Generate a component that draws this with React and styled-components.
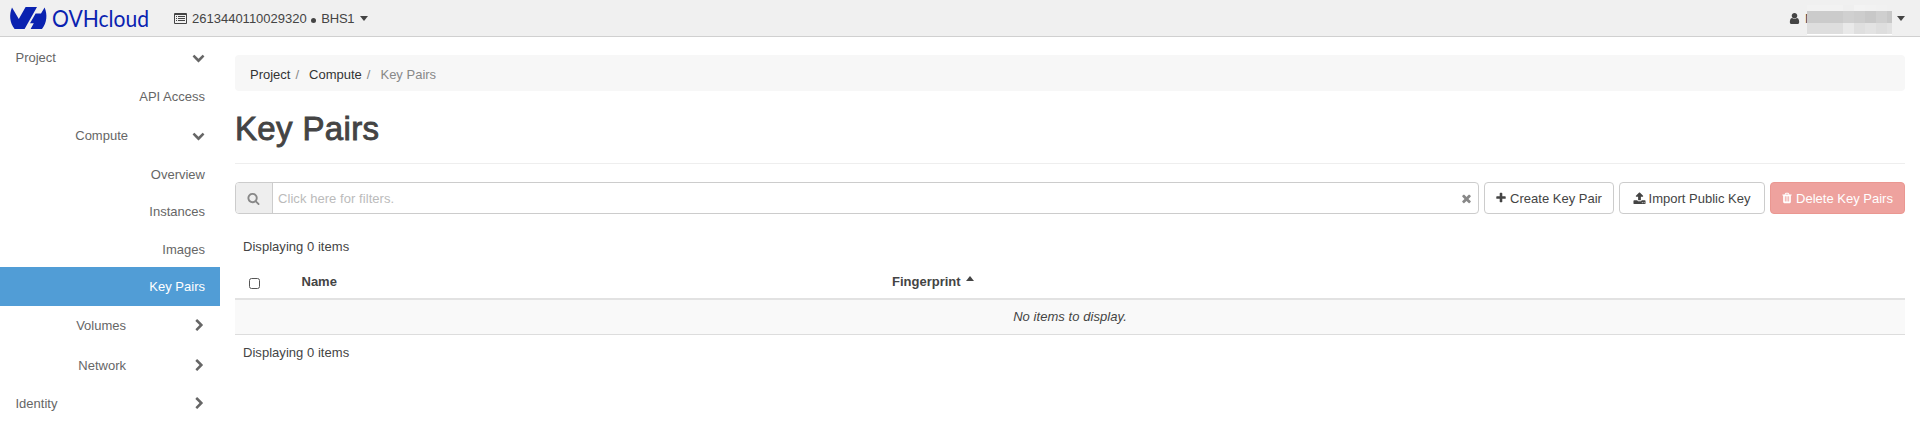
import React from "react";
import styled, { createGlobalStyle, css } from "styled-components";

const GlobalStyle = createGlobalStyle`
  *, *::before, *::after { box-sizing: border-box; }
  body {
    margin: 0;
    background: #fff;
    color: #444;
    font: 13px/18px "Liberation Sans", Arial, sans-serif;
    overflow: hidden;
  }
`;

const paths = {
  down: "M1683 808l-742 741q-19 19-45 19t-45-19l-742-741q-19-19-19-45.5t19-45.5l166-165q19-19 45-19t45 19l531 531 531-531q19-19 45-19t45 19l166 165q19 19 19 45.5t-19 45.5z",
  right: "M1363 877l-742 742q-19 19-45 19t-45-19l-166-166q-19-19-19-45t19-45l531-531-531-531q-19-19-19-45t19-45l166-166q19-19 45-19t45 19l742 742q19 19 19 45t-19 45z",
  search: "M1216 832q0-185-131.5-316.5t-316.5-131.5-316.5 131.5-131.5 316.5 131.5 316.5 316.5 131.5 316.5-131.5 131.5-316.5zm512 832q0 52-38 90t-90 38q-54 0-90-38l-343-342q-179 124-399 124-143 0-273.5-55.5t-225-150-150-225-55.5-273.5 55.5-273.5 150-225 225-150 273.5-55.5 273.5 55.5 225 150 150 225 55.5 273.5q0 220-124 399l343 343q37 37 37 90z",
  times: "M1490 1322q0 40-28 68l-136 136q-28 28-68 28t-68-28l-294-294-294 294q-28 28-68 28t-68-28l-136-136q-28-28-28-68t28-68l294-294-294-294q-28-28-28-68t28-68l136-136q28-28 68-28t68 28l294 294 294-294q28-28 68-28t68 28l136 136q28 28 28 68t-28 68l-294 294 294 294q28 28 28 68z",
  plus: "M1600 736v192q0 40-28 68t-68 28h-416v416q0 40-28 68t-68 28h-192q-40 0-68-28t-28-68v-416h-416q-40 0-68-28t-28-68v-192q0-40 28-68t68-28h416v-416q0-40 28-68t68-28h192q40 0 68 28t28 68v416h416q40 0 68 28t28 68z",
  upload: "M1344 1472q0-26-19-45t-45-19-45 19-19 45 19 45 45 19 45-19 19-45zm256 0q0-26-19-45t-45-19-45 19-19 45 19 45 45 19 45-19 19-45zm128-224v320q0 40-28 68t-68 28h-1472q-40 0-68-28t-28-68v-320q0-40 28-68t68-28h427q21 56 70.5 92t110.5 36h256q61 0 110.5-36t70.5-92h427q40 0 68 28t28 68zm-325-648q-17 40-59 40h-256v448q0 26-19 45t-45 19h-256q-26 0-45-19t-19-45v-448h-256q-42 0-59-40-17-39 14-69l448-448q18-19 45-19t45 19l448 448q31 30 14 69z",
  trash: "M704 1376v-704q0-14-9-23t-23-9h-64q-14 0-23 9t-9 23v704q0 14 9 23t23 9h64q14 0 23-9t9-23zm256 0v-704q0-14-9-23t-23-9h-64q-14 0-23 9t-9 23v704q0 14 9 23t23 9h64q14 0 23-9t9-23zm256 0v-704q0-14-9-23t-23-9h-64q-14 0-23 9t-9 23v704q0 14 9 23t23 9h64q14 0 23-9t9-23zm-544-992h448l-48-117q-7-9-17-11h-317q-10 2-17 11zm928 32v64q0 14-9 23t-23 9h-96v948q0 83-47 143.5t-113 60.5h-832q-66 0-113-58.5t-47-141.5v-952h-96q-14 0-23-9t-9-23v-64q0-14 9-23t23-9h309l70-167q15-37 54-63t79-26h320q40 0 79 26t54 63l70 167h309q14 0 23 9t9 23z",
  user: "M1536 1399q0 109-62.5 187t-150.5 78h-854q-88 0-150.5-78t-62.5-187q0-85 8.5-160.5t31.5-152 58.5-131 94-89 134.5-34.5q131 128 313 128t313-128q76 0 134.5 34.5t94 89 58.5 131 31.5 152 8.5 160.5zm-256-887q0 159-112.5 271.5t-271.5 112.5-271.5-112.5-112.5-271.5 112.5-271.5 271.5-112.5 271.5 112.5 112.5 271.5z",
};

const Svg = styled.svg`
  display: block;
  flex: none;
  fill: currentColor;
  overflow: visible;
`;

function Icon({ name, size = 13, ...rest }) {
  return (
    <Svg width={size} height={size} viewBox="0 0 1792 1792" {...rest}>
      <path d={paths[name]} />
    </Svg>
  );
}

const Navbar = styled.header`
  display: flex;
  align-items: center;
  height: 37px;
  background: #f0f0f0;
  border-bottom: 1px solid #d0d0d0;
  padding: 0 15px 0 10px;
`;
const LogoText = styled.text`
  font: 400 24px Lato, "Open Sans", sans-serif;
  fill: #0a22b0;
`;
const ProjectPicker = styled.div`
  display: flex;
  align-items: center;
  margin-left: 24px;
`;
const ProjectName = styled.span`
  margin-left: 5px;
  padding-top: 1px;
`;
const Bullet = styled.i`
  width: 5px;
  height: 5px;
  margin: 4px 5px 0 4.5px;
  border-radius: 50%;
  background: #444;
`;
const Region = styled.span`
  padding-top: 1px;
  letter-spacing: -0.2px;
`;
const Caret = styled.i`
  width: 0;
  height: 0;
  border: 4px solid transparent;
  ${(p) =>
    p.$up
      ? css`border-bottom: 5px solid #444; border-top: 0; margin: 0 0 6px 5px;`
      : css`border-top: 5px solid #444; border-bottom: 0; margin-left: ${p.$gap || 5}px;`}
`;
const UserMenu = styled.div`
  display: flex;
  align-items: center;
  margin-left: auto;
  height: 36px;
`;
const UserInitial = styled.span`
  width: 10px;
  margin: 1px -8px 0 4px;
`;
const RedactedName = styled.div`
  z-index: 1;
  display: grid;
  grid-template-columns: 36px 11px 11px 11px 11px 5px;
  grid-template-rows: 6px 12px 11px 1px;
  margin-top: 3px;
`;
const Pixel = styled.i`
  background: ${(p) => p.$tone};
`;

const Body = styled.div`
  display: flex;
`;
const Sidebar = styled.nav`
  width: 220px;
  flex: none;
  padding-top: 1px;
  color: #666;
`;
const NavItem = styled.a`
  display: flex;
  align-items: center;
  justify-content: ${(p) => (p.$leaf ? "flex-end" : "space-between")};
  height: ${(p) => p.$height || 39}px;
  padding: ${(p) => p.$drop || 0}px 15px 0 15.5px;
`;
const ActiveItem = styled(NavItem)`
  background: #519dd6;
  color: #fff;
`;
const GroupLabel = styled.span`
  ${(p) => p.$nested && css`width: 112.5px; padding-right: ${p.$inset}px; text-align: right;`}
`;
const Chevron = styled.span`
  display: flex;
  margin: 0 ${(p) => (p.$open ? 0.5 : -1)}px 1px 0;
`;

const Content = styled.main`
  flex: 1;
  padding: 18px 15px 0;
`;
const Breadcrumb = styled.ol`
  display: flex;
  align-items: center;
  height: 36px;
  margin: 0;
  padding: 3px 15px 0;
  list-style: none;
  background: #f7f7f7;
  border-radius: 4px;
`;
const Crumb = styled.li`
  color: ${(p) => (p.$current ? "#888" : "#333")};
  &:not(:last-child)::after {
    content: "/";
    padding: 0 10px 0 5px;
    color: #888;
  }
`;
const PageHeader = styled.div`
  height: 73px;
  padding-top: 18px;
  border-bottom: 1px solid #eee;
`;
const Title = styled.h1`
  margin: 0;
  font-size: 33px;
  font-weight: 400;
  line-height: 40px;
  letter-spacing: 0.35px;
  -webkit-text-stroke: 0.9px #444;
`;
const Toolbar = styled.div`
  display: flex;
  gap: 5px;
  height: 32px;
  margin-top: 18px;
`;
const SearchBox = styled.div`
  flex: 1;
  display: flex;
  align-items: center;
  border: 1px solid #ccc;
  border-radius: 4px;
  overflow: hidden;
  padding-right: 5px;
  color: #888;
`;
const SearchAddon = styled.div`
  display: flex;
  align-items: center;
  justify-content: center;
  width: 37px;
  height: 30px;
  padding-right: 1px;
  background: #eee;
  border-right: 1px solid #ccc;
`;
const Placeholder = styled.span`
  flex: 1;
  padding: 2px 0 0 5px;
  color: #bbb;
  letter-spacing: 0.06px;
`;
const Button = styled.button`
  display: flex;
  align-items: center;
  justify-content: center;
  gap: 3px;
  width: ${(p) => p.$width}px;
  padding: 0 1px 0 0;
  font: inherit;
  border-radius: 4px;
  border: 1px solid ${(p) => (p.$danger ? "#ea9791" : "#ccc")};
  background: ${(p) => (p.$danger ? "#eea29e" : "#fff")};
  color: ${(p) => (p.$danger ? "#fff" : "#444")};
`;
const ButtonLabel = styled.span`
  padding-top: 2px;
`;
const Count = styled.div`
  height: 34px;
  padding: 8px 8px 0;
  letter-spacing: 0.04px;
`;
const FooterCount = styled(Count)`
  padding-top: 9px;
`;
const Table = styled.div`
  display: grid;
  grid-template-columns: 58.5px 590.5px 1fr;
`;
const HeadCell = styled.div`
  display: flex;
  align-items: center;
  height: 36px;
  padding: 1px 8px 0;
  border-bottom: 2px solid #e2e2e2;
  font-weight: 700;
`;
const Checkbox = styled.span`
  width: 11px;
  height: 11px;
  margin: 3px 0 0 6px;
  border: 1px solid #555;
  border-radius: 2.5px;
`;
const EmptyRow = styled.div`
  grid-column: 1 / -1;
  height: 35px;
  line-height: 34px;
  text-align: center;
  font-style: italic;
  letter-spacing: 0.06px;
  background: #f9f9f9;
  border-bottom: 1px solid #ddd;
`;
const Listing = styled.section`
  padding-top: 16px;
`;

const nav = [
  { label: "Project", open: true },
  { label: "API Access", leaf: true },
  { label: "Compute", open: true, nested: true, inset: 0 },
  { label: "Overview", leaf: true, height: 38, drop: 2 },
  { label: "Instances", leaf: true, height: 37 },
  { label: "Images", leaf: true, height: 37, drop: 2 },
  { label: "Key Pairs", leaf: true, active: true },
  { label: "Volumes", nested: true, inset: 2 },
  { label: "Network", nested: true, inset: 2, drop: 2 },
  { label: "Identity", drop: 1 },
];

const tones = [
  "#f2f2f2", "#efefef", "#f3f3f3", "#f2f2f2", "#f1f1f1", "#f0f0f0",
  "#cbcbcb", "#d0d0d0", "#cdcdcd", "#c8c8c8", "#cfcfcf", "#c8c8c8",
  "#dedede", "#e9e9e9", "#dfdfdf", "#e3e3e3", "#dedede", "#e2e2e2",
  "#fff", "#fff", "#fff", "#fff", "#fff", "#fff",
];

function Logo() {
  return (
    <Svg width="140" height="36" viewBox="0 0 140 36">
      <g fill="#0a22b0">
        <path d="M2 7.5 L8.8 19 L15.6 7 H27 L14.6 29 H4.6 C-0.4 22.5-1 14.5 2 7.5z" />
        <path d="M34.6 7.5 C37.6 14.5 37 22.5 32 29 H20.6 L23.8 23.3 H20 L25.6 13.6 H31z" />
      </g>
      <LogoText x="42" y="27" textLength="97" lengthAdjust="spacingAndGlyphs">OVHcloud</LogoText>
    </Svg>
  );
}

function ListIcon() {
  return (
    <Svg width="13" height="11" viewBox="0 0 13 11">
      <path fillRule="evenodd" d="M1 0h11q1 0 1 1v9q0 1-1 1H1q-1 0-1-1V1q0-1 1-1zM1 2v8h11V2zM2 3h1v1H2zM4 3h7v1H4zM2 5h1v1H2zM4 5h7v1H4zM2 7h1v1H2zM4 7h7v1H4z" />
    </Svg>
  );
}

function NavEntry({ item }) {
  const Row = item.active ? ActiveItem : NavItem;
  return (
    <Row $leaf={item.leaf} $height={item.height} $drop={item.drop}>
      <GroupLabel $nested={item.nested} $inset={item.inset}>{item.label}</GroupLabel>
      {!item.leaf && (
        <Chevron $open={item.open}>
          <Icon name={item.open ? "down" : "right"} />
        </Chevron>
      )}
    </Row>
  );
}

export default function App() {
  return (
    <>
      <GlobalStyle />
      <Navbar>
        <Logo />
        <ProjectPicker>
          <ListIcon />
          <ProjectName>2613440110029320</ProjectName>
          <Bullet />
          <Region>BHS1</Region>
          <Caret $gap={6} />
        </ProjectPicker>
        <UserMenu>
          <Icon name="user" />
          <UserInitial>N</UserInitial>
          <RedactedName>
            {tones.map((tone, i) => <Pixel key={i} $tone={tone} />)}
          </RedactedName>
          <Caret />
        </UserMenu>
      </Navbar>
      <Body>
        <Sidebar>
          {nav.map((item) => <NavEntry key={item.label} item={item} />)}
        </Sidebar>
        <Content>
          <Breadcrumb>
            <Crumb>Project</Crumb>
            <Crumb>Compute</Crumb>
            <Crumb $current>Key Pairs</Crumb>
          </Breadcrumb>
          <PageHeader>
            <Title>Key Pairs</Title>
          </PageHeader>
          <Toolbar>
            <SearchBox>
              <SearchAddon><Icon name="search" /></SearchAddon>
              <Placeholder>Click here for filters.</Placeholder>
              <Icon name="times" />
            </SearchBox>
            <Button $width={130}><Icon name="plus" size={12} /><ButtonLabel>Create Key Pair</ButtonLabel></Button>
            <Button $width={146}><Icon name="upload" /><ButtonLabel>Import Public Key</ButtonLabel></Button>
            <Button $width={135} $danger><Icon name="trash" size={12} /><ButtonLabel>Delete Key Pairs</ButtonLabel></Button>
          </Toolbar>
          <Listing>
            <Count>Displaying 0 items</Count>
            <Table>
              <HeadCell><Checkbox /></HeadCell>
              <HeadCell>Name</HeadCell>
              <HeadCell>Fingerprint<Caret $up /></HeadCell>
              <EmptyRow>No items to display.</EmptyRow>
            </Table>
            <FooterCount>Displaying 0 items</FooterCount>
          </Listing>
        </Content>
      </Body>
    </>
  );
}
